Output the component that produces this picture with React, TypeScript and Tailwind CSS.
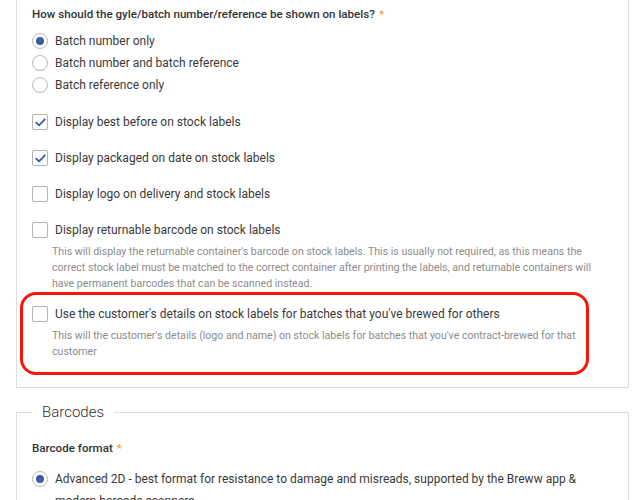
import { ReactNode } from "react";

function Radio({ checked, children }: { checked?: boolean; children: ReactNode }) {
  return (
    <label className="flex items-start gap-[7px] text-[12px] leading-[22px] text-[#3a3a3a]">
      <span className="mt-[3px] flex h-4 w-4 shrink-0 items-center justify-center rounded-full border border-[#b9b9b9] bg-white">
        {checked && <span className="h-2 w-2 rounded-full bg-[#3b5ba5]" />}
      </span>
      <span>{children}</span>
    </label>
  );
}

function Checkbox({ checked, children }: { checked?: boolean; children: ReactNode }) {
  return (
    <label className="flex items-center gap-[7px] text-[12px] leading-[22px] text-[#3a3a3a]">
      <span className="flex h-4 w-4 shrink-0 items-center justify-center rounded-[2px] border border-[#b5b5b5] bg-white">
        {checked && (
          <svg width="11" height="9" viewBox="0 0 11 9" fill="none">
            <path d="M1.2 4.6 L4 7.3 L9.8 1.3" stroke="#3b5ba5" strokeWidth="1.8" strokeLinecap="round" strokeLinejoin="round" />
          </svg>
        )}
      </span>
      <span>{children}</span>
    </label>
  );
}

function Help({ children }: { children: ReactNode }) {
  return <p className="ml-[20px] w-[540px] text-[10.6px] leading-4 text-[#8c8c8c]">{children}</p>;
}

const Req = () => <span className="ml-1 text-[#f5a24b]">*</span>;

export default function App() {
  return (
    <div className="h-[500px] w-[639px] overflow-hidden bg-white font-['Roboto',sans-serif]">
      <div className="ml-4 mr-[10px] border-x border-b border-[#dedede] pb-[27px] pl-[15px] pt-1">
        <div className="text-[11.6px] font-medium leading-5 text-[#333]">
          How should the gyle/batch number/reference be shown on labels?
          <Req />
        </div>
        <div className="mt-[6px] flex flex-col">
          <Radio checked>Batch number only</Radio>
          <Radio>Batch number and batch reference</Radio>
          <Radio>Batch reference only</Radio>
        </div>

        <div className="mt-[15px] flex flex-col gap-[14px]">
          <Checkbox checked>Display best before on stock labels</Checkbox>
          <Checkbox checked>Display packaged on date on stock labels</Checkbox>
          <Checkbox>Display logo on delivery and stock labels</Checkbox>
        </div>

        <div className="mt-[14px]">
          <Checkbox>Display returnable barcode on stock labels</Checkbox>
          <div className="mt-[3px]">
            <Help>
              This will display the returnable container's barcode on stock labels. This is usually not required, as this
              means the correct stock label must be matched to the correct container after printing the labels, and
              returnable containers will have permanent barcodes that can be scanned instead.
            </Help>
          </div>
        </div>

        <div className="relative mt-[11px]">
          <Checkbox>Use the customer's details on stock labels for batches that you've brewed for others</Checkbox>
          <div className="mt-[3px]">
            <Help>
              This will the customer's details (logo and name) on stock labels for batches that you've contract-brewed for
              that customer
            </Help>
          </div>
          <div className="pointer-events-none absolute left-[-12px] top-[-11px] h-[83px] w-[569px] rounded-[16px] border-[3.5px] border-[#f5170a]" />
        </div>
      </div>

      <fieldset className="ml-4 mr-[10px] mt-3 border border-[#dedede] pl-[15px]">
        <legend className="px-[10px] text-[15px] font-light leading-6 text-[#333]">Barcodes</legend>
        <div className="mt-[14px] text-[11.6px] font-medium leading-5 text-[#333]">
          Barcode format
          <Req />
        </div>
        <div className="mt-[10px] w-[545px]">
          <Radio checked>
            Advanced 2D - best format for resistance to damage and misreads, supported by the Breww app &amp; modern
            barcode scanners
          </Radio>
        </div>
      </fieldset>
    </div>
  );
}
